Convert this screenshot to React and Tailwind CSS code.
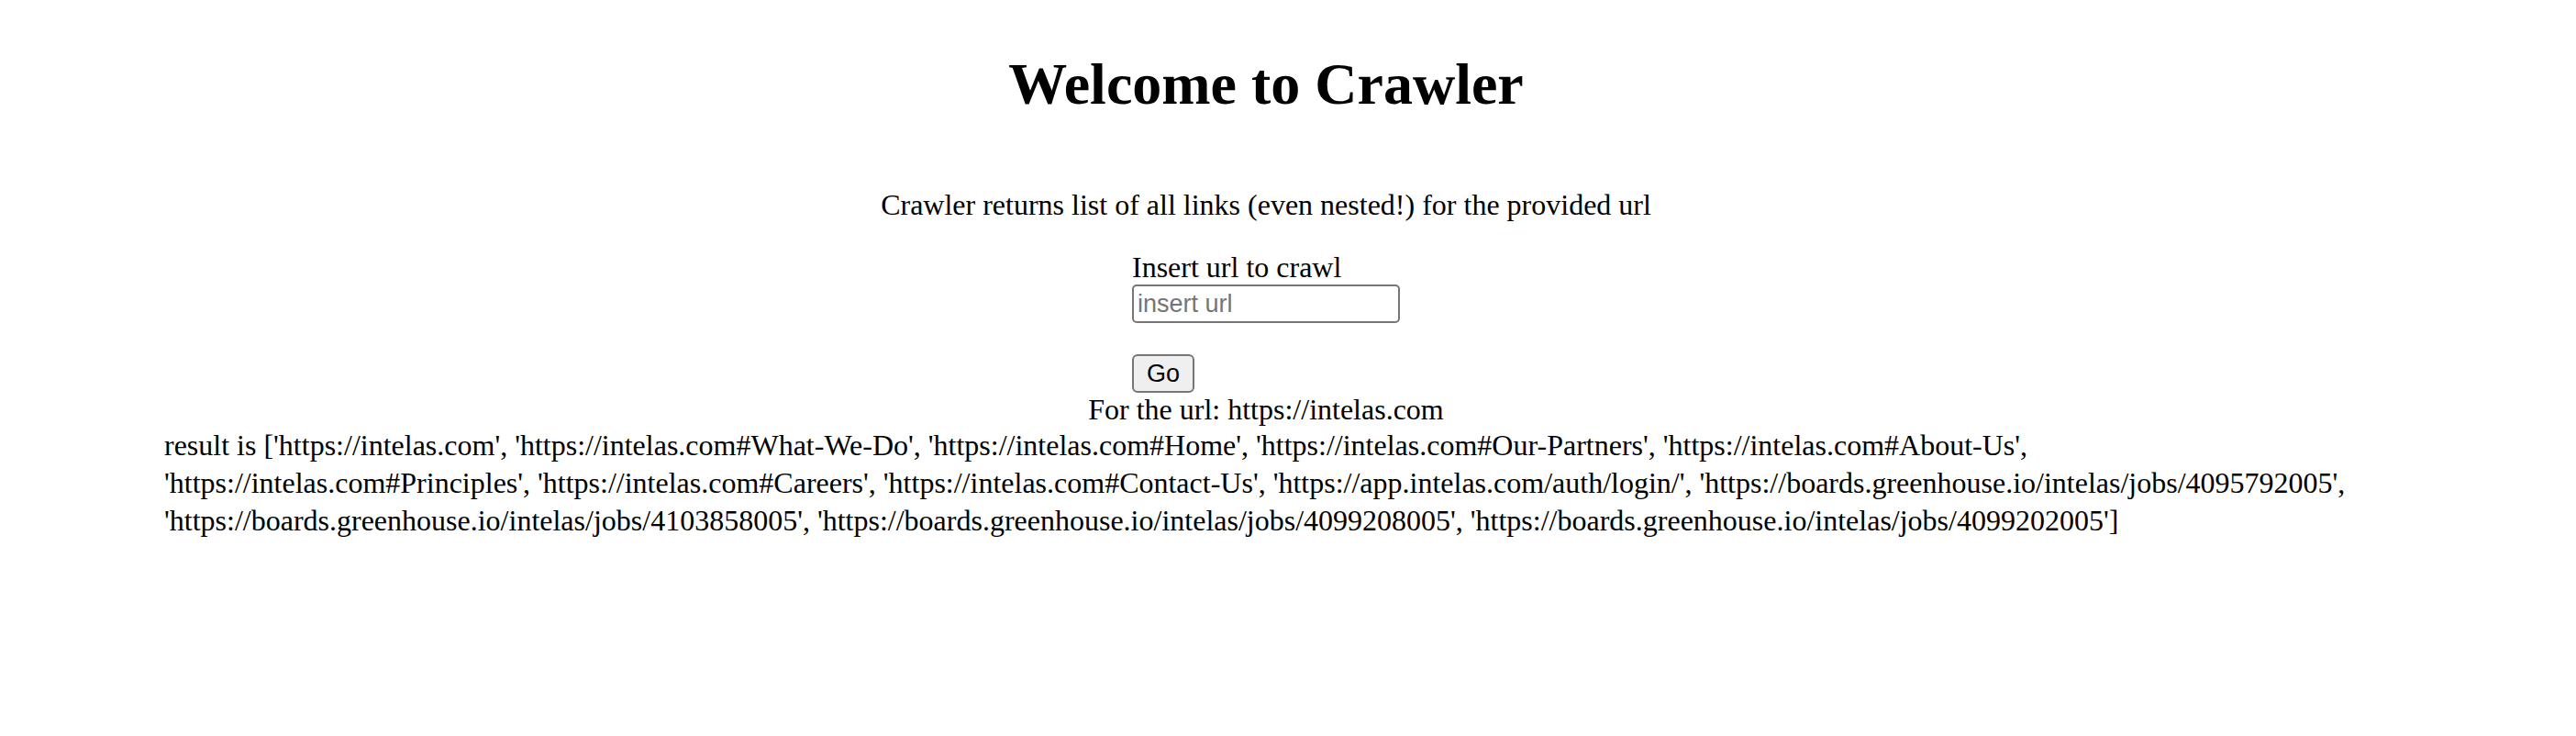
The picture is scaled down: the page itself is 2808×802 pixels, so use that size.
import { useState } from "react";

const links = [
  "https://intelas.com",
  "https://intelas.com#What-We-Do",
  "https://intelas.com#Home",
  "https://intelas.com#Our-Partners",
  "https://intelas.com#About-Us",
  "https://intelas.com#Principles",
  "https://intelas.com#Careers",
  "https://intelas.com#Contact-Us",
  "https://app.intelas.com/auth/login/",
  "https://boards.greenhouse.io/intelas/jobs/4095792005",
  "https://boards.greenhouse.io/intelas/jobs/4103858005",
  "https://boards.greenhouse.io/intelas/jobs/4099208005",
  "https://boards.greenhouse.io/intelas/jobs/4099202005",
];

export default function App() {
  const [url, setUrl] = useState("");
  const result = "result is [" + links.map((l) => `'${l}'`).join(", ") + "]";

  return (
    <div className="min-h-screen bg-white pt-[55px] pl-[16px] pr-[64px] font-['Liberation_Serif',serif] text-[32px] leading-[1.15] text-black">
      <h1 className="mb-[76px] text-center text-[64px] font-bold">Welcome to Crawler</h1>
      <p className="mb-[32px] text-center">Crawler returns list of all links (even nested!) for the provided url</p>

      <form className="mx-auto flex w-fit flex-col items-start" onSubmit={(e) => e.preventDefault()}>
        <label htmlFor="url">Insert url to crawl</label>
        <input
          id="url"
          value={url}
          onChange={(e) => setUrl(e.target.value)}
          placeholder="insert url"
          className="h-[42px] w-[292px] rounded-[5px] border-2 border-[#767676] px-[4px] font-['Liberation_Sans',sans-serif] text-[27px] placeholder:text-[#757575]"
        />
        <button className="mt-[34px] h-[42px] w-[68px] rounded-[6px] border-2 border-[#767676] bg-[#efefef] font-['Liberation_Sans',sans-serif] text-[27px]">
          Go
        </button>
      </form>

      <div className="text-center">For the url: https://intelas.com</div>
      <div className="pr-[150px] pl-[163px] leading-[41px]">{result}</div>
    </div>
  );
}
